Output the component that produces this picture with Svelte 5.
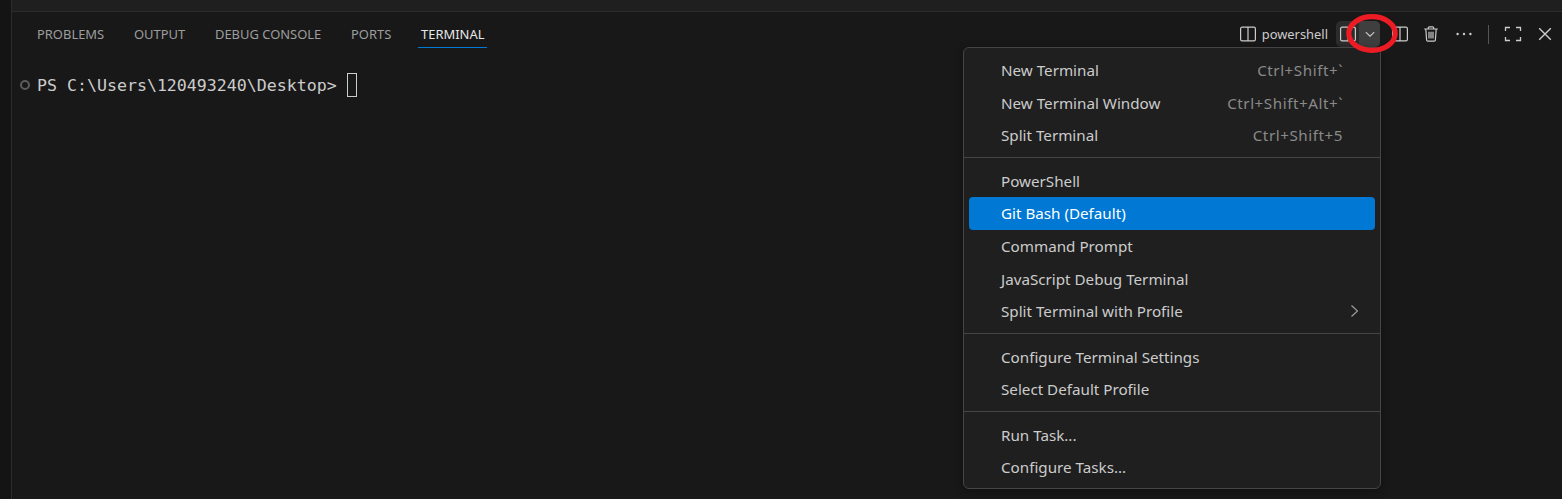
<script>
	const tabs = ['PROBLEMS', 'OUTPUT', 'DEBUG CONSOLE', 'PORTS', 'TERMINAL'];

	const menu = [
		[
			{ label: 'New Terminal', keys: 'Ctrl+Shift+`' },
			{ label: 'New Terminal Window', keys: 'Ctrl+Shift+Alt+`' },
			{ label: 'Split Terminal', keys: 'Ctrl+Shift+5' }
		],
		[
			{ label: 'PowerShell' },
			{ label: 'Git Bash (Default)', active: true },
			{ label: 'Command Prompt' },
			{ label: 'JavaScript Debug Terminal' },
			{ label: 'Split Terminal with Profile', sub: true }
		],
		[{ label: 'Configure Terminal Settings' }, { label: 'Select Default Profile' }],
		[{ label: 'Run Task...' }, { label: 'Configure Tasks...' }]
	];
</script>

{#snippet splitIcon()}
	<svg width="18" height="18" viewBox="0 0 18 18" fill="none" stroke="currentColor" stroke-width="1.2">
		<rect x="1.6" y="2.1" width="14.8" height="13.8" rx="1.6" />
		<path d="M9 2.1v13.8" />
	</svg>
{/snippet}

<div class="shell">
	<div class="rail"></div>
	<div class="main">
		<div class="topstrip"></div>
		<div class="panel">
			<header class="bar">
				<nav class="tabs">
					{#each tabs as tab}
						<span class="tab" class:current={tab === 'TERMINAL'}>{tab}</span>
					{/each}
				</nav>
				<div class="actions">
					<span class="icon">{@render splitIcon()}</span>
					<span class="shellname">powershell</span>
					<div class="combo">
						<span class="combo-left">{@render splitIcon()}</span>
						<span class="combo-right">
							<svg width="14" height="14" viewBox="0 0 14 14" fill="none" stroke="currentColor" stroke-width="1.1">
								<path d="M2.8 5.2 7 9.2l4.2-4" />
							</svg>
						</span>
					</div>
					<span class="icon split">{@render splitIcon()}</span>
					<span class="icon trash">
						<svg width="18" height="18" viewBox="0 0 18 18" fill="none" stroke="currentColor" stroke-width="1.2">
							<path d="M2.2 4h13.6M6.3 4V2.8c0-.6.4-1 1-1h3.4c.6 0 1 .4 1 1V4M3.8 4l.8 11c0 .7.6 1.2 1.2 1.2h6.4c.6 0 1.2-.5 1.2-1.2l.8-11M7 6.8v6.8M9 6.8v6.8M11 6.8v6.8" />
						</svg>
					</span>
					<span class="icon dots">
						<svg width="18" height="18" viewBox="0 0 18 18" fill="currentColor">
							<circle cx="2.6" cy="9" r="1.2" />
							<circle cx="9" cy="9" r="1.2" />
							<circle cx="15.4" cy="9" r="1.2" />
						</svg>
					</span>
					<span class="divider"></span>
					<span class="icon maxi">
						<svg width="18" height="18" viewBox="0 0 18 18" fill="none" stroke="currentColor" stroke-width="1.3">
							<path d="M1.5 6V2.5h4.5M12 2.5h4.5V6M16.5 12v3.5H12M6 15.5H1.5V12" />
						</svg>
					</span>
					<span class="icon close">
						<svg width="18" height="18" viewBox="0 0 18 18" fill="none" stroke="currentColor" stroke-width="1.4">
							<path d="m3.2 3.2 11.6 11.6M14.8 3.2 3.2 14.8" />
						</svg>
					</span>
				</div>
			</header>

			<div class="terminal">
				<span class="marker"></span>
				<span class="prompt">PS C:\Users\120493240\Desktop&gt;</span>
				<span class="cursor"></span>
			</div>
		</div>
	</div>

	<div class="menu">
		{#each menu as group, i}
			{#if i > 0}<div class="sep"></div>{/if}
			{#each group as item}
				<div class="item" class:active={item.active}>
					<span>{item.label}</span>
					{#if item.keys}<span class="keys">{item.keys}</span>{/if}
					{#if item.sub}
						<svg class="chev" width="12" height="14" viewBox="0 0 12 14" fill="none" stroke="currentColor" stroke-width="1.1">
							<path d="m2.5 1.5 6 5.5-6 5.5" />
						</svg>
					{/if}
				</div>
			{/each}
		{/each}
	</div>

	<svg class="ring" width="56" height="44" viewBox="0 0 56 44" fill="none">
		<ellipse cx="28" cy="21.5" rx="23.2" ry="16.8" stroke="#ed1c24" stroke-width="5.2" />
	</svg>
</div>

<style>
	:global(body) {
		margin: 0;
		background: #181818;
	}

	.shell {
		position: relative;
		display: flex;
		width: 1562px;
		height: 499px;
		overflow: hidden;
		background: #181818;
		font-family: 'Noto Sans', 'Open Sans', sans-serif;
		color: #ccc;
	}

	.rail {
		width: 11px;
		flex: none;
		background: #141414;
		border-right: 1px solid #2b2b2b;
	}

	.main {
		flex: 1;
		min-width: 0;
		display: flex;
		flex-direction: column;
	}

	.topstrip {
		height: 11px;
		flex: none;
		background: #1f1f1f;
		border-bottom: 1px solid #2b2b2b;
	}

	.panel {
		flex: 1;
		display: flex;
		flex-direction: column;
	}

	.bar {
		display: flex;
		justify-content: space-between;
		align-items: flex-start;
		height: 36px;
		flex: none;
		padding-left: 22px;
	}

	.tabs {
		display: flex;
		gap: 23.75px;
		padding-top: 12px;
	}

	.tab {
		height: 24px;
		padding: 0 3px;
		font-size: 12.95px;
		line-height: 21px;
		color: #9d9d9d;
		box-sizing: border-box;
	}

	.tab.current {
		color: #e7e7e7;
		border-bottom: 1px solid #0078d4;
	}

	.actions {
		display: flex;
		align-items: center;
		height: 26px;
		margin-top: 9px;
		padding-right: 8px;
		color: #ccc;
	}

	.icon {
		display: flex;
		width: 18px;
		height: 18px;
	}

	.shellname {
		margin: 0 8px 0 5px;
		font-size: 12.9px;
		color: #ccc;
	}

	.combo {
		display: flex;
		width: 44px;
		height: 26px;
		border-radius: 5px;
		overflow: hidden;
		background: #2c2c2c;
	}

	.combo-left {
		display: flex;
		align-items: center;
		justify-content: center;
		width: 23px;
	}

	.combo-right {
		display: flex;
		align-items: center;
		justify-content: center;
		flex: 1;
		background: #3f3f3f;
	}

	.split {
		margin-left: 11px;
	}

	.trash {
		margin-left: 13px;
	}

	.dots {
		margin-left: 15px;
	}

	.divider {
		width: 1px;
		height: 19px;
		margin: 0 15px 0 15px;
		background: #555;
	}

	.close {
		margin-left: 14px;
	}

	.terminal {
		display: flex;
		align-items: center;
		height: 24px;
		margin-top: 25px;
		padding-left: 8px;
	}

	.marker {
		box-sizing: border-box;
		width: 10px;
		height: 10px;
		border: 2.5px solid #5c5c5c;
		border-radius: 50%;
		margin-right: 7px;
	}

	.prompt {
		font-family: 'DejaVu Sans Mono', 'Liberation Mono', monospace;
		font-size: 16.6px;
		color: #ccc;
		white-space: pre;
	}

	.cursor {
		box-sizing: border-box;
		width: 10px;
		height: 24px;
		margin-left: 10px;
		border: 1px solid #ccc;
	}

	.menu {
		position: absolute;
		top: 47px;
		left: 963px;
		box-sizing: border-box;
		width: 418px;
		height: 442px;
		padding: 5.6px 5px 4px;
		background: #1f1f1f;
		border: 1px solid #454545;
		border-radius: 6px;
		box-shadow: 0 2px 8px rgba(0, 0, 0, 0.36);
		font-size: 15.2px;
	}

	.item {
		display: flex;
		align-items: center;
		justify-content: space-between;
		height: 32.67px;
		padding: 0 32px;
		border-radius: 4px;
		color: #ccc;
	}

	.item.active {
		background: #0078d4;
		color: #fff;
	}

	.keys {
		color: #8a8a8a;
		letter-spacing: 0.55px;
	}

	.chev {
		margin-right: -18px;
		color: #a0a0a0;
	}

	.sep {
		height: 1px;
		margin: 5.6px -5px 6.2px;
		background: #454545;
	}

	.ring {
		position: absolute;
		left: 1344px;
		top: 12px;
	}
</style>
